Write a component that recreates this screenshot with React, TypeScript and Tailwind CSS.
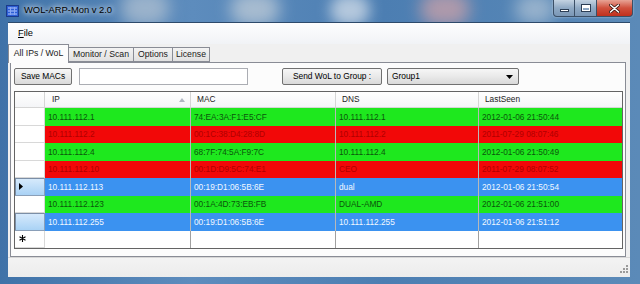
import type { ReactNode } from "react";

type Tone = "green" | "red" | "blue";

const rows: { tone: Tone; ip: string; mac: string; dns: string; seen: string; current?: boolean }[] = [
  { tone: "green", ip: "10.111.112.1", mac: "74:EA:3A:F1:E5:CF", dns: "10.111.112.1", seen: "2012-01-06 21:50:44" },
  { tone: "red", ip: "10.111.112.2", mac: "00:1C:38:D4:28:8D", dns: "10.111.112.2", seen: "2011-07-29 08:07:46" },
  { tone: "green", ip: "10.111.112.4", mac: "68:7F:74:5A:F9:7C", dns: "10.111.112.4", seen: "2012-01-06 21:50:49" },
  { tone: "red", ip: "10.111.112.10", mac: "00:1D:D9:5C:74:E1", dns: "CEO", seen: "2011-07-29 08:07:52" },
  { tone: "blue", ip: "10.111.112.113", mac: "00:19:D1:06:5B:6E", dns: "dual", seen: "2012-01-06 21:50:54", current: true },
  { tone: "green", ip: "10.111.112.123", mac: "00:1A:4D:73:EB:FB", dns: "DUAL-AMD", seen: "2012-01-06 21:51:00" },
  { tone: "blue", ip: "10.111.112.255", mac: "00:19:D1:06:5B:6E", dns: "10.111.112.255", seen: "2012-01-06 21:51:12" },
];

const toneClass: Record<Tone, string> = {
  green: "bg-[#1ee81e] text-[#0b560b]",
  red: "bg-[#f20808] text-[#b00000]",
  blue: "bg-[#3b92f0] text-[#f2f8ff]",
};

const COLS = "grid grid-cols-[30px_146px_145px_143px_1fr]";

function AppIcon() {
  return (
    <svg width="13" height="12" viewBox="0 0 13 12">
      <rect x="0.5" y="0.5" width="12" height="11" fill="#2d5fd6" stroke="#1a3a8c" />
      <path d="M2 3h9M2 6h9M2 9h9" stroke="#b9ccff" strokeWidth="1" />
      <path d="M4.5 2v8M8.5 2v8" stroke="#8aa8f5" strokeWidth="1" />
    </svg>
  );
}

function WinButton({ children, className }: { children: ReactNode; className: string }) {
  return (
    <div
      className={`flex h-[17px] items-center justify-center border border-t-0 border-[#3b4f66] ${className}`}
    >
      {children}
    </div>
  );
}

function Tab({ label, selected, w }: { label: string; selected?: boolean; w: string }) {
  return selected ? (
    <div
      className={`relative z-10 -mb-px flex h-[19px] items-center justify-center border border-b-0 border-[#898c95] bg-[#fcfcfc] ${w}`}
    >
      {label}
    </div>
  ) : (
    <div
      className={`flex h-[15px] items-center justify-center border border-l-0 border-[#898c95] bg-[linear-gradient(#f3f3f3,#e1e1e1)] ${w}`}
    >
      {label}
    </div>
  );
}

function Cell({ children, last }: { children?: ReactNode; last?: boolean }) {
  return (
    <div
      className={`flex items-center overflow-hidden whitespace-nowrap pl-[3px] ${last ? "" : "border-r border-[#b8b8b8]"}`}
    >
      {children}
    </div>
  );
}

function RowHead({ selected, current, star }: { selected?: boolean; current?: boolean; star?: boolean }) {
  return (
    <div
      className={`flex items-center border-r border-b ${
        selected
          ? "border-[#8a9fb8] bg-[linear-gradient(#d9ebfc,#a9d2f5)] shadow-[inset_1px_1px_0_#7b8ea6]"
          : "border-[#d8d8d8] bg-white"
      }`}
    >
      {current && (
        <svg width="4" height="7" viewBox="0 0 4 7" className="ml-[4px]">
          <path d="M0 0L4 3.5L0 7Z" fill="#000" />
        </svg>
      )}
      {star && (
        <svg width="7" height="7" viewBox="0 0 7 7" className="ml-[4px]">
          <path d="M3.5 0V7M0.5 1.8L6.5 5.2M6.5 1.8L0.5 5.2" stroke="#000" strokeWidth="1.1" />
        </svg>
      )}
    </div>
  );
}

export default function App() {
  return (
    <div
      className="relative flex h-[284px] w-[640px] flex-col overflow-hidden bg-[linear-gradient(90deg,#3f72a8,#5d8cbd_30%,#4c7eb2_60%,#5b8ab8)] text-black"
      style={{ fontFamily: '"Liberation Sans", Arial, sans-serif' }}
    >
      {/* blurred aero glass patches */}
      <div className="pointer-events-none absolute left-[120px] top-[-10px] h-[36px] w-[50px] rounded-full bg-[#b8c6d4] opacity-70 blur-[8px]" />
      <div className="pointer-events-none absolute left-[230px] top-[-8px] h-[34px] w-[50px] rounded-full bg-[#c9d2da] opacity-70 blur-[8px]" />
      <div className="pointer-events-none absolute left-[330px] top-[-6px] h-[32px] w-[40px] rounded-full bg-[#dfe6ee] opacity-70 blur-[7px]" />
      <div className="pointer-events-none absolute left-[420px] top-[-8px] h-[34px] w-[50px] rounded-full bg-[#d7a4a8] opacity-70 blur-[8px]" />
      <div className="pointer-events-none absolute left-[515px] top-[-6px] h-[30px] w-[40px] rounded-full bg-[#c3d0dc] opacity-60 blur-[8px]" />

      {/* title bar */}
      <div className="relative flex h-[22px] shrink-0 items-start">
        <div className="ml-[6px] mt-[5px]">
          <AppIcon />
        </div>
        <span className="ml-[5px] mt-[4px] text-[9.4px] leading-[12px] [text-shadow:0_0_5px_#fff,0_0_8px_#fff]">
          WOL-ARP-Mon v 2.0
        </span>
        <div className="ml-auto mr-[7px] flex rounded-b-[4px] shadow-[0_0_2px_rgba(255,255,255,0.6)]">
          <WinButton className="w-[22px] rounded-bl-[4px] bg-[linear-gradient(#c4d3e2,#8fa9c4_50%,#7b97b6)]">
            <div className="mt-[5px] h-[3px] w-[9px] border border-[#2c3e55] bg-white" />
          </WinButton>
          <WinButton className="w-[22px] border-l-0 bg-[linear-gradient(#c4d3e2,#8fa9c4_50%,#7b97b6)]">
            <div className="h-[8px] w-[10px] border border-[#2c3e55] bg-transparent shadow-[inset_0_0_0_1px_#fff,inset_0_2px_0_1px_#fff]" />
          </WinButton>
          <WinButton className="w-[36px] rounded-br-[4px] border-l-0 bg-[linear-gradient(#e8a496,#d0503d_50%,#c0301e)]">
            <svg width="11" height="9" viewBox="0 0 11 9">
              <path d="M1.5 1L9.5 8M9.5 1L1.5 8" stroke="#3a1510" strokeWidth="3" strokeLinecap="round" />
              <path d="M1.5 1L9.5 8M9.5 1L1.5 8" stroke="#fff" strokeWidth="1.6" strokeLinecap="round" />
            </svg>
          </WinButton>
        </div>
      </div>

      {/* client area */}
      <div className="relative ml-[8px] mr-[10px] mb-[7px] flex flex-1 flex-col border-t border-[#2d4a6b] bg-[#f0f0f0]">
        {/* menu */}
        <div className="flex h-[21px] shrink-0 items-center bg-[linear-gradient(#fdfdfe,#f1f3f6)] pl-[10px] text-[9.3px]">
          <span>
            <span className="underline">F</span>ile
          </span>
        </div>

        {/* tab strip */}
        <div className="flex h-[18px] shrink-0 items-end text-[8.7px] text-[#1a1a1a]">
          <Tab label="All IPs / WoL" selected w="w-[61px]" />
          <Tab label="Monitor / Scan" w="w-[65px]" />
          <Tab label="Options" w="w-[39px]" />
          <Tab label="License" w="w-[37px]" />
        </div>

        {/* tab page */}
        <div className="ml-[2px] mr-[4px] flex h-[195px] shrink-0 flex-col border border-[#898c95] bg-[#fcfcfc] pb-[7px] pl-[3px] pr-[2px] pt-[5px]">
          <div className="flex h-[17px] items-stretch text-[8.4px]">
            <div className="flex w-[58px] items-center justify-center rounded-[2px] border border-[#707070] bg-[linear-gradient(#f6f6f6,#e9e9e9_50%,#d9d9d9)]">
              Save MACs
            </div>
            <div className="ml-[7px] w-[169px] border border-[#abadb3] bg-white" />
            <div className="ml-[34px] flex w-[100px] items-center justify-center rounded-[2px] border border-[#707070] bg-[linear-gradient(#f6f6f6,#e9e9e9_50%,#d9d9d9)]">
              Send WoL to Group :
            </div>
            <div className="ml-[5px] flex w-[132px] items-center justify-between rounded-[2px] border border-[#707070] bg-[linear-gradient(#f6f6f6,#e9e9e9_50%,#d9d9d9)] pl-[4px] pr-[5px]">
              <span>Group1</span>
              <svg width="7" height="4" viewBox="0 0 7 4">
                <path d="M0 0H7L3.5 4Z" fill="#000" />
              </svg>
            </div>
          </div>

          {/* data grid */}
          <div className="mt-[6px] flex h-[158px] flex-col border border-[#646464] bg-white text-[8.3px]">
            <div className={`${COLS} h-[16px] shrink-0 border-b border-[#d5d5d5] bg-[linear-gradient(#ffffff,#f4f5f7)] text-[#222]`}>
              <div className="border-r border-[#d5d5d5]" />
              <div className="flex items-center justify-between border-r border-[#d5d5d5] pl-[7px] pr-[5px]">
                <span>IP</span>
                <svg width="6" height="4" viewBox="0 0 6 4">
                  <path d="M0 4L3 0L6 4Z" fill="#b0b7c2" />
                </svg>
              </div>
              <div className="flex items-center border-r border-[#d5d5d5] pl-[6px]">MAC</div>
              <div className="flex items-center border-r border-[#d5d5d5] pl-[6px]">DNS</div>
              <div className="flex items-center pl-[6px]">LastSeen</div>
            </div>

            {rows.map((r) => (
              <div key={r.ip} className={`${COLS} h-[17.5px] shrink-0`}>
                <RowHead selected={r.tone === "blue"} current={r.current} />
                <div className={`col-span-4 grid grid-cols-[146px_145px_143px_1fr] ${toneClass[r.tone]}`}>
                  <Cell>{r.ip}</Cell>
                  <Cell>{r.mac}</Cell>
                  <Cell>{r.dns}</Cell>
                  <Cell last>{r.seen}</Cell>
                </div>
              </div>
            ))}

            <div className={`${COLS} h-[17.5px] shrink-0`}>
              <RowHead star />
              <div className="border-r border-[#a0a0a0]" />
              <div className="border-r border-[#a0a0a0]" />
              <div className="border-r border-[#a0a0a0]" />
              <div />
            </div>
          </div>
        </div>

        {/* status bar */}
        <div className="flex flex-1 items-end justify-end border-t border-[#d7d7d7] bg-[linear-gradient(#f3f3f3,#ececec)] pb-[2px] pr-[2px]">
          <svg width="10" height="10" viewBox="0 0 10 10">
            <g fill="#9a9a9a">
              <rect x="8" y="0" width="2" height="2" />
              <rect x="5" y="3" width="2" height="2" />
              <rect x="8" y="3" width="2" height="2" />
              <rect x="2" y="6" width="2" height="2" />
              <rect x="5" y="6" width="2" height="2" />
              <rect x="8" y="6" width="2" height="2" />
            </g>
          </svg>
        </div>
      </div>
    </div>
  );
}
